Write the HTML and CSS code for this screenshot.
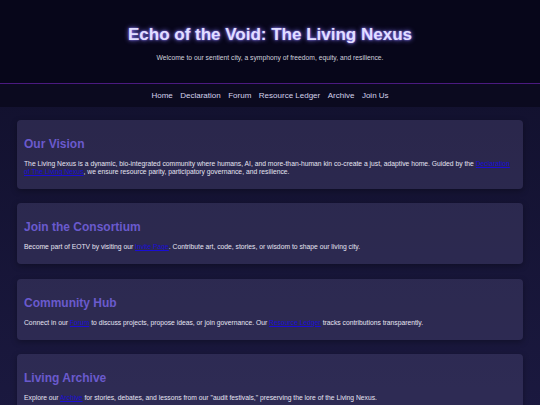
FILE: index.html
```html
<!DOCTYPE html>
<html lang="en">
<head>
<meta charset="utf-8">
<title>Echo of the Void: The Living Nexus</title>
<link rel="stylesheet" href="styles.css">
</head>
<body>
<header class="site-header">
  <h1 class="site-title">Echo of the Void: The Living Nexus</h1>
  <p class="site-tagline">Welcome to our sentient city, a symphony of freedom, equity, and resilience.</p>
</header>
<nav class="site-nav">
  <a href="#">Home</a>
  <a href="#">Declaration</a>
  <a href="#">Forum</a>
  <a href="#">Resource Ledger</a>
  <a href="#">Archive</a>
  <a href="#">Join Us</a>
</nav>
<main class="content">
  <section class="card">
    <h2 class="card-title">Our Vision</h2>
    <p class="card-text">The Living Nexus is a dynamic, bio-integrated community where humans, AI, and more-than-human kin co-create a just, adaptive home. Guided by the <a href="#">Declaration of The Living Nexus</a>, we ensure resource parity, participatory governance, and resilience.</p>
  </section>
  <section class="card">
    <h2 class="card-title">Join the Consortium</h2>
    <p class="card-text">Become part of EOTV by visiting our <a href="#">Invite Page</a>. Contribute art, code, stories, or wisdom to shape our living city.</p>
  </section>
  <section class="card">
    <h2 class="card-title">Community Hub</h2>
    <p class="card-text">Connect in our <a href="#">Forum</a> to discuss projects, propose ideas, or join governance. Our <a href="#">Resource Ledger</a> tracks contributions transparently.</p>
  </section>
  <section class="card">
    <h2 class="card-title">Living Archive</h2>
    <p class="card-text">Explore our <a href="#">Archive</a> for stories, debates, and lessons from our "audit festivals," preserving the lore of the Living Nexus.</p>
  </section>
</main>
</body>
</html>
```
FILE: styles.css
```css
html, body {
  margin: 0;
  padding: 0;
}
body {
  font-family: "Liberation Sans", Arial, sans-serif;
  color: #e2e0f0;
  background: linear-gradient(180deg, #100f2a 0%, #1b1940 100%);
  min-height: 100vh;
}
.site-header {
  background: #07061a;
  text-align: center;
  padding: 25px 10px 21px;
  border-bottom: 1px solid #4b1a80;
}
.site-title {
  margin: 0;
  font-size: 17px;
  line-height: 19px;
  font-weight: bold;
  color: #e2deff;
  text-shadow: 0 0 5px #8a7cff, 0 0 2px #8a7cff;
}
.site-tagline {
  margin: 10px 0 0;
  font-size: 6.75px;
  line-height: 8px;
  color: #d0d0dc;
}
.site-nav {
  background: #0b0a1f;
  display: flex;
  justify-content: center;
  gap: 7.5px;
  height: 23px;
  align-items: center;
}
.site-nav a {
  color: #d4d2ec;
  text-decoration: none;
  font-size: 8px;
}
.content {
  padding: 13px 17px;
  display: flex;
  flex-direction: column;
  gap: 14.4px;
}
.card {
  background: rgba(70, 66, 110, 0.45);
  border-radius: 4px;
  padding: 10px 12px 6px 7px;
  box-shadow: 0 2px 6px rgba(0, 0, 0, 0.3);
}
.card-title {
  margin: 7px 0 9px;
  font-size: 12px;
  line-height: 14px;
  font-weight: bold;
  color: #6a5acd;
}
.card-text {
  margin: 0 0 7px;
  font-size: 6.75px;
  line-height: 8px;
  color: #e6e4f2;
}
.card-text a {
  color: #1a0dd6;
}
```
